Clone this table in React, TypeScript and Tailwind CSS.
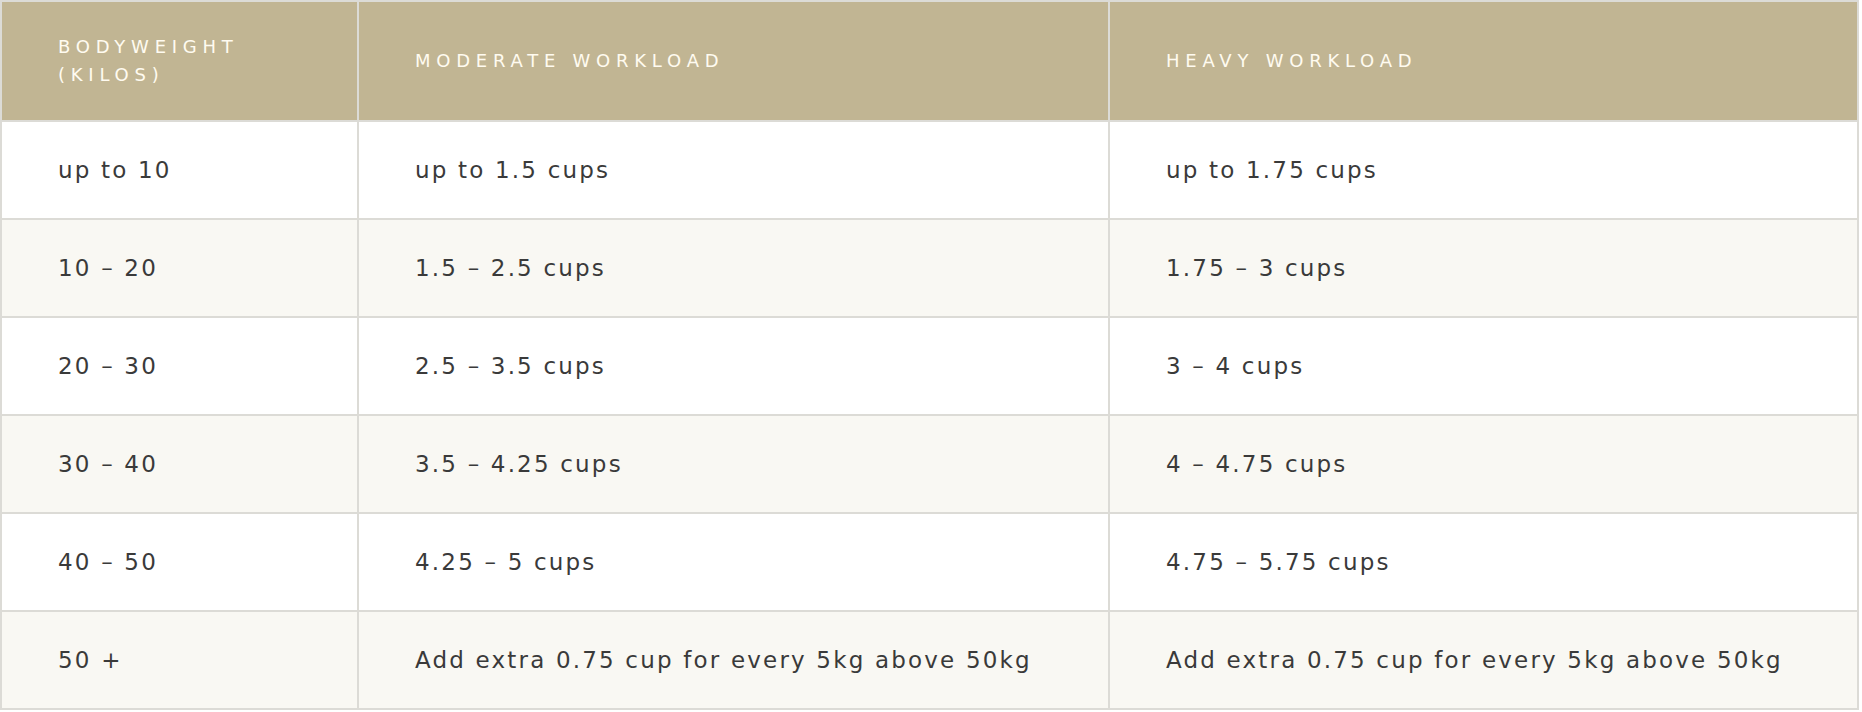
import React from "react";

const rows: [string, string, string][] = [
  ["up to 10", "up to 1.5 cups", "up to 1.75 cups"],
  ["10 – 20", "1.5 – 2.5 cups", "1.75 – 3 cups"],
  ["20 – 30", "2.5 – 3.5 cups", "3 – 4 cups"],
  ["30 – 40", "3.5 – 4.25 cups", "4 – 4.75 cups"],
  ["40 – 50", "4.25 – 5 cups", "4.75 – 5.75 cups"],
  ["50 +", "Add extra 0.75 cup for every 5kg above 50kg", "Add extra 0.75 cup for every 5kg above 50kg"],
];

export default function App() {
  return (
    <div className="w-[1862px] h-[712px] bg-white" style={{ fontFamily: "'DejaVu Sans', 'Noto Sans', sans-serif" }}>
      <div className="w-[1859px] bg-[#dcdbd6] p-[2px] grid grid-cols-[355px_749px_1fr] gap-[2px]">
        {["BODYWEIGHT (KILOS)", "MODERATE WORKLOAD", "HEAVY WORKLOAD"].map((h) => (
          <div key={h} className="h-[118px] bg-[#c1b593] flex items-center px-[56px]">
            <span className="text-[18px] leading-[28px] tracking-[0.32em] text-[#fffbf0]">{h}</span>
          </div>
        ))}
        {rows.map((r, i) =>
          r.map((c, j) => (
            <div
              key={i + "-" + j}
              className={`h-[96px] flex items-center px-[56px] pt-[1px] ${i % 2 === 1 ? "bg-[#f9f8f3]" : "bg-white"}`}
            >
              <span className="text-[23px] tracking-[0.095em] text-[#3a3a3a]">{c}</span>
            </div>
          ))
        )}
      </div>
    </div>
  );
}
